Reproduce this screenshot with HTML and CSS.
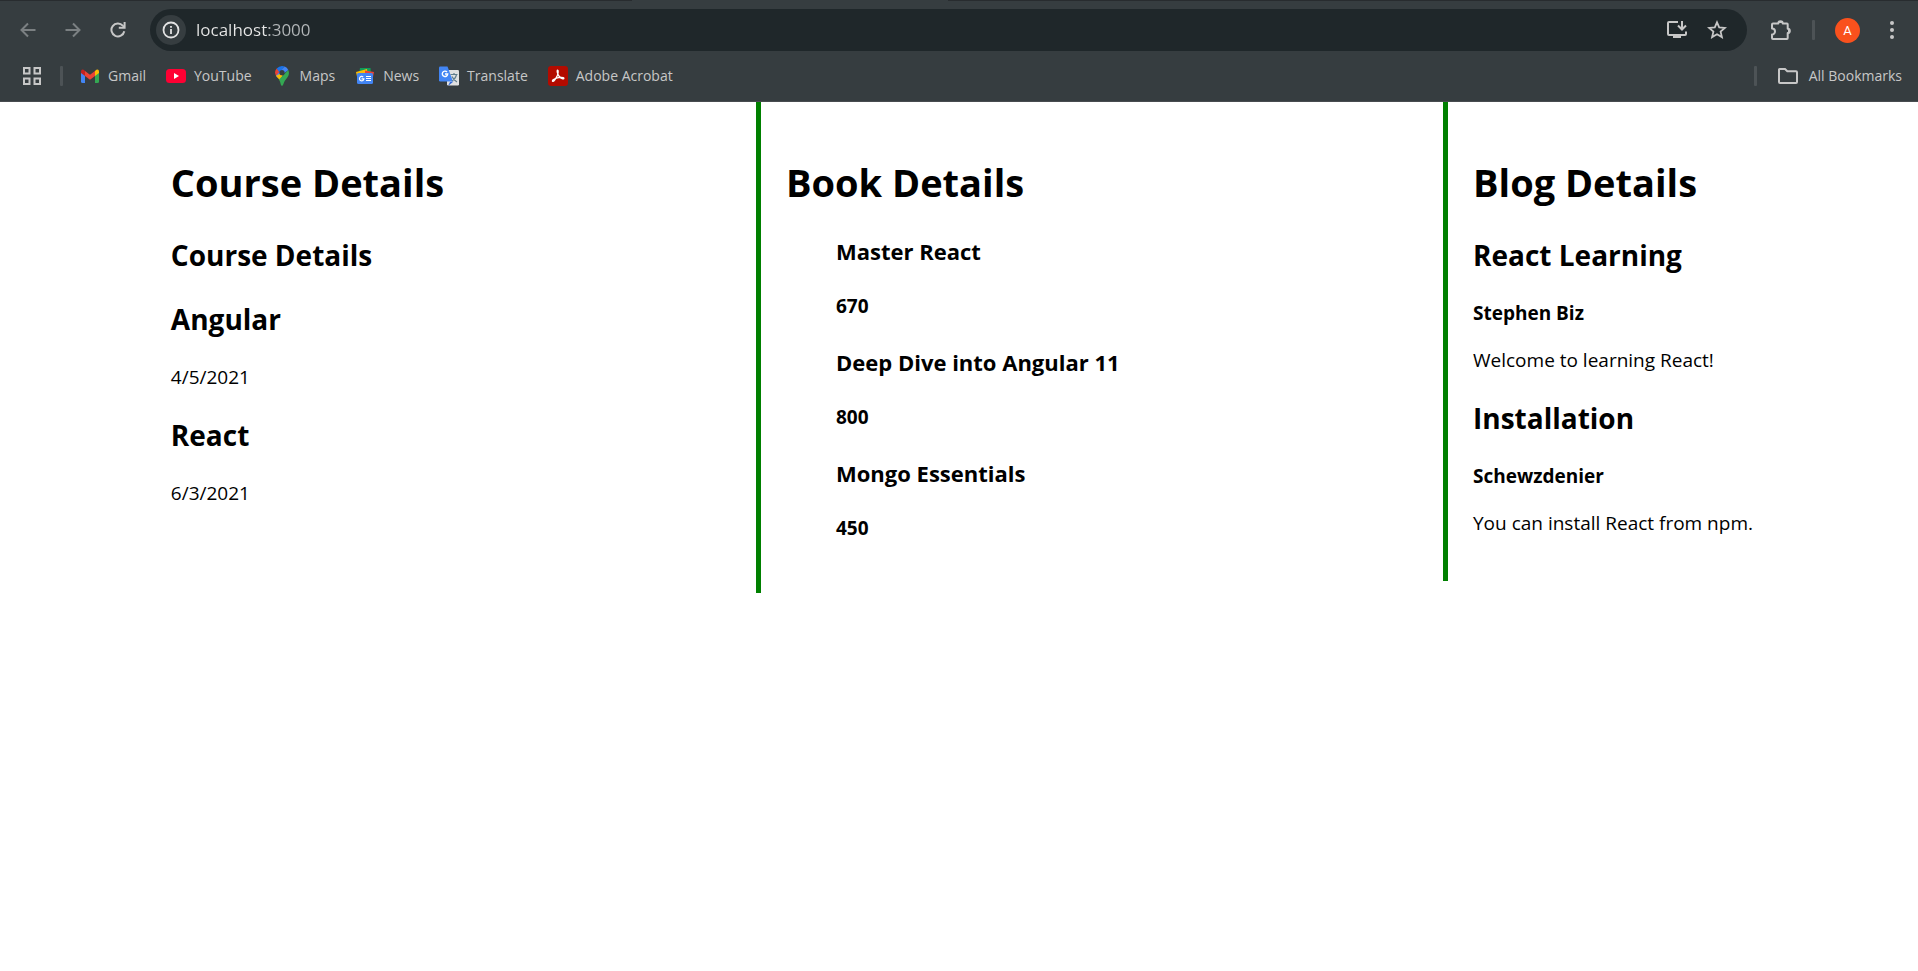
FILE: index.html
```html
<!DOCTYPE html>
<html lang="en">
<head>
<meta charset="utf-8">
<title>localhost:3000</title>
<link rel="stylesheet" href="styles.css">
</head>
<body>
<header class="browser">
  <div class="tab-edge"><span class="active-tab"></span></div>
  <div class="toolbar">
    <nav class="history" aria-label="History">
      <button class="icon-button dim" aria-label="Back"><svg width="16" height="16" viewBox="0 0 16 16"><path d="M15.500 8H2M8 1.500 1.500 8 8 14.500" fill="none" stroke="currentColor" stroke-width="2"/></svg></button>
      <button class="icon-button dim" aria-label="Forward"><svg width="16" height="16" viewBox="0 0 16 16"><path d="M.5 8H14M8 1.500 14.500 8 8 14.500" fill="none" stroke="currentColor" stroke-width="2"/></svg></button>
      <button class="icon-button" aria-label="Reload"><svg width="16" height="16" viewBox="0 0 16 16"><path d="M14.300 9.300A6.500 6.500 0 1 1 12.800 3.600L14.500 5.300" fill="none" stroke="currentColor" stroke-width="2"/><path d="M15.600 0V6.800H8.800V4.800H13.600V0Z" fill="currentColor"/></svg></button>
    </nav>
    <div class="omnibox">
      <button class="site-info" aria-label="View site information"><svg width="18" height="18" viewBox="0 0 18 18"><circle cx="9" cy="9" r="7.500" fill="none" stroke="currentColor" stroke-width="1.800"/><path d="M8.100 8h1.800v5H8.100zM8.100 5h1.800v1.800H8.100z" fill="currentColor"/></svg></button>
      <input class="address" type="text" aria-label="Address" value="localhost:3000" spellcheck="false">
      <button class="box-button" aria-label="Install app"><svg width="22" height="20" viewBox="0 0 22 20"><path d="M12 2H3Q2 2 2 3V14Q2 15 3 15H19Q20 15 20 14V11.500" fill="none" stroke="currentColor" stroke-width="2"/><path d="M7 15h8v3H7z" fill="currentColor"/><path d="M16 1V9M12 5.500 16 9.500 20 5.500" fill="none" stroke="currentColor" stroke-width="2"/></svg></button>
      <button class="box-button" aria-label="Bookmark this tab"><svg width="20" height="20" viewBox="0 0 20 20"><path d="M10 2.300 12.200 7.400 17.900 7.900 13.600 11.600 14.900 17.100 10 14.200 5.100 17.100 6.400 11.600 2.100 7.900 7.800 7.400Z" fill="none" stroke="currentColor" stroke-width="1.800"/></svg></button>
    </div>
    <button class="icon-button" aria-label="Extensions"><svg width="22" height="22" viewBox="0 0 22 22"><path d="M3 4.500H8.300A2.200 2.200 0 0 1 12.700 4.500H17Q17.700 4.500 17.700 5.200V9.800A2 2 0 0 1 17.700 14V19Q17.700 20 17 20H3Q2 20 2 19V15.500A3 3 0 0 0 2 9.500V5.500Q2 4.500 3 4.500Z" fill="none" stroke="currentColor" stroke-width="2" stroke-linejoin="round"/><path d="M8.500 4A2 2 0 0 1 12.500 4ZM18 9.700A2.200 2.200 0 0 1 18 14.200Z" fill="currentColor"/></svg></button>
    <span class="divider"></span>
    <button class="avatar" aria-label="Profile">A</button>
    <button class="icon-button menu" aria-label="Menu"><svg width="6" height="18" viewBox="0 0 6 18"><g fill="currentColor"><circle cx="3" cy="2" r="2"/><circle cx="3" cy="9" r="2"/><circle cx="3" cy="16" r="2"/></g></svg></button>
  </div>
  <nav class="bookmarks" aria-label="Bookmarks">
    <button class="apps" aria-label="Apps"><svg width="18" height="18" viewBox="0 0 18 18"><path d="M1 1h5.500v5.500H1zM11.500 1H17v5.500h-5.500zM1 11.500h5.500V17H1zM11.500 11.500H17V17h-5.500z" fill="none" stroke="currentColor" stroke-width="2"/></svg></button>
    <span class="divider"></span>
    <a class="bookmark" href="#"><svg width="20" height="20" viewBox="0 0 20 20"><path d="M1 6 5 9V17H2.500Q1 17 1 15.500Z" fill="#4285f4"/><path d="M15 9 19 6V15.500Q19 17 17.500 17H15Z" fill="#34a853"/><path d="M15 5 16.300 3.800Q18.800 2.500 19 5.500V7L15 10Z" fill="#fbbc04"/><path d="M5 5 10 8.800 15 5V10L10 13.800 5 10Z" fill="#ea4335"/><path d="M1 7V5.500Q1.200 2.500 3.700 3.800L5 5V10Z" fill="#c5221f"/></svg>Gmail</a>
    <a class="bookmark" href="#"><svg width="20" height="20" viewBox="0 0 20 20"><rect y="3" width="20" height="14" rx="3.500" fill="#ff0033"/><path d="M8 7 13 10 8 13Z" fill="#fff"/></svg>YouTube</a>
    <a class="bookmark" href="#"><svg width="20" height="20" viewBox="0 0 20 20"><path d="M4.700 2.600 10 7 6 12Q3 9.500 3 6.700 3.200 4 4.700 2.600Z" fill="#ea4335"/><path d="M4.700 2.600Q7 0 10 0 11.500 0 12.700.6L7.500 6.500Z" fill="#1a73e8"/><path d="M12.700.6Q15 1.500 16.300 4L6.200 12 3.900 9.800Z" fill="#4285f4"/><path d="M3.900 9.800 12 6 8.300 14.700Q6.500 12.700 3.900 9.800Z" fill="#fbbc04"/><path d="M16.300 4Q18 8 15.300 11.500 12.500 14.500 11.200 18.500 10.900 19.800 10 19.800 9.100 19.800 8.800 18.500 8.200 15.800 7 13.600Z" fill="#34a853"/><circle cx="10" cy="6.700" r="2.600" fill="#363d40"/></svg>Maps</a>
    <a class="bookmark" href="#"><svg width="20" height="20" viewBox="0 0 20 20"><path d="M5 2 15.500 2 16 8H4Z" fill="#0f9d58"/><path d="M1 6 12 3 13 12 3 15Z" fill="#fbbc04"/><path d="M10 4.500 19 6 17 16H10Z" fill="#ea4335"/><rect x="2" y="7" width="16" height="11" rx="1.500" fill="#4285f4"/><path d="M8.200 11A2.200 2.200 0 1 0 8.900 12.800H6.500M11 10.500H16M11 12.500H16M11 14.500H16" fill="none" stroke="#fff" stroke-width="1.200"/></svg>News</a>
    <a class="bookmark" href="#"><svg width="20" height="20" viewBox="0 0 20 20"><rect x="8" y="4" width="12" height="15.500" rx="1.200" fill="#e0e0e0"/><path d="M11 16 9 20 14.500 15.500Z" fill="#3367d6"/><path d="M1.200.5H8.500L14 15.500H1.200Q0 15.500 0 14.300V1.700Q0 .5 1.200.5Z" fill="#4285f4"/><path d="M8 6A2.700 2.700 0 1 0 8.700 8H6" fill="none" stroke="#fff" stroke-width="1.400"/><path d="M11.500 8.500H18.500M15 7V8.500M17.500 8.500Q16.500 13 13 14.500M13 10.500Q14.500 14 18 16" fill="none" stroke="#607d8b" stroke-width="1.200"/></svg>Translate</a>
    <a class="bookmark" href="#"><svg width="20" height="20" viewBox="0 0 20 20"><rect width="20" height="20" rx="3" fill="#b30b00"/><path d="M9.700 4.200C8.500 4.300 9.500 8.300 11.300 10.500 13 12.600 15.700 13.600 15.900 12.400 16 11 11.500 11 8.400 12.100 5.500 13.200 3.900 14.600 4.600 15.300 5.600 16 8 12.500 9.300 9.500 10.300 7 10.500 4.300 9.700 4.200Z" fill="none" stroke="#fff" stroke-width="1.300"/></svg>Adobe Acrobat</a>
    <div class="all-bookmarks">
      <span class="divider"></span>
      <a class="bookmark folder" href="#"><svg width="22" height="18" viewBox="0 0 22 18"><path d="M2.500 2H8L10.300 4.300H19Q20 4.300 20 5.300V15Q20 16 19 16H3Q2 16 2 15V2.500Q2 2 2.500 2Z" fill="none" stroke="currentColor" stroke-width="2"/></svg>All Bookmarks</a>
    </div>
  </nav>
</header>
<main class="columns">
  <section class="column first">
    <h1>Course Details</h1>
    <h2>Course Details</h2>
    <h2>Angular</h2>
    <p>4/5/2021</p>
    <h2>React</h2>
    <p>6/3/2021</p>
  </section>
  <section class="column">
    <h1>Book Details</h1>
    <div class="books">
      <h3>Master React</h3>
      <h4>670</h4>
      <h3>Deep Dive into Angular 11</h3>
      <h4>800</h4>
      <h3>Mongo Essentials</h3>
      <h4>450</h4>
    </div>
  </section>
  <section class="column">
    <h1>Blog Details</h1>
    <h2>React Learning</h2>
    <p><strong>Stephen Biz</strong></p>
    <p>Welcome to learning React!</p>
    <h2>Installation</h2>
    <p><strong>Schewzdenier</strong></p>
    <p>You can install React from npm.</p>
  </section>
</main>
</body>
</html>
```
FILE: styles.css
```css
* { box-sizing: border-box; }
body {
  margin: 0;
  background: #fff;
  color: #000;
  font: 19px/27px "Segoe UI", "Open Sans", "Noto Sans", sans-serif;
}
svg { display: block; flex: none; }
button, input {
  margin: 0;
  padding: 0;
  border: 0;
  background: none;
  color: inherit;
  font: inherit;
}
button { display: grid; place-items: center; flex: none; }

.browser {
  background: #363d40;
  border-bottom: 1px solid #484c4f;
  color: #c7c7c7;
}
.tab-edge {
  display: grid;
  grid-template-columns: 632fr 316fr 970fr;
  height: 1px;
  background: #282c2f;
}
.active-tab { grid-column: 2; background: #363d40; }
.toolbar {
  display: flex;
  align-items: center;
  height: 58px;
  padding: 0 14px 0 10px;
}
.history { display: flex; gap: 9px; margin-right: 14px; }
.icon-button { width: 36px; height: 36px; }
.icon-button.dim { color: #7b8082; }
.omnibox {
  display: flex;
  align-items: center;
  flex: 1;
  min-width: 0;
  height: 42px;
  margin-right: 16px;
  padding: 0 10px 0 6px;
  border-radius: 21px;
  background: #1f272a;
}
.site-info {
  width: 30px;
  height: 30px;
  border-radius: 50%;
  background: #363d40;
  color: #e3e3e3;
}
.address {
  flex: 1;
  min-width: 0;
  margin-left: 10px;
  font-size: 17px;
  line-height: 24px;
  color: #e3e3e3;
  background: linear-gradient(90deg, #e8e8e8 73px, #b4b8ba 73px);
  background-clip: text;
  -webkit-text-fill-color: transparent;
}
.box-button { width: 40px; height: 36px; }
.divider {
  flex: none;
  width: 3px;
  height: 20px;
  border-radius: 1px;
  background: #4d5356;
}
.toolbar .divider { margin: 0 20px 0 13px; }
.avatar {
  width: 25px;
  height: 25px;
  border-radius: 50%;
  background: #f9511d;
  color: #fff;
  font: 13px/25px Roboto, sans-serif;
}
.menu { width: 24px; margin-left: 20px; }

.bookmarks {
  display: flex;
  align-items: center;
  height: 42px;
  padding: 0 16px 8px 23px;
  font-size: 14px;
  line-height: 20px;
}
.apps { margin-right: 19px; }
.bookmark {
  display: flex;
  align-items: center;
  gap: 8px;
  margin-left: 20px;
  color: inherit;
  text-decoration: none;
  white-space: nowrap;
}
.bookmark.folder { gap: 10px; }
.bookmarks > .divider + .bookmark { margin-left: 17px; }
.all-bookmarks { display: flex; align-items: center; margin-left: auto; }

.columns {
  display: grid;
  grid-template-columns: 756fr 687fr 475fr;
  align-items: start;
}
.column { padding: 27px 25px 24px; border-left: 5px solid green; }
.column.first { padding-left: 22.6%; border-left: 0; }
h1, h2, h3, h4 { font-weight: 700; }
h1 { margin: 27px 0; font-size: 38px; line-height: 53px; }
h2 { margin: 25px 0; font-size: 28px; line-height: 39px; }
h3 { margin: 23px 0; font-size: 22px; line-height: 30px; }
h4 { margin: 27px 0; font-size: 19px; line-height: 27px; }
p { margin: 20px 0; }
.books { padding-left: 50px; }
```
